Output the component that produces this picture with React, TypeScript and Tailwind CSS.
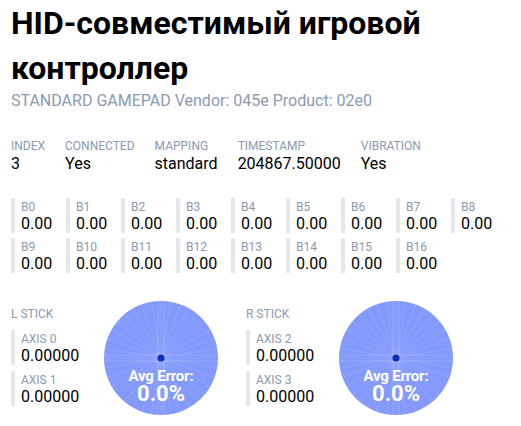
import React from "react";

const LABEL = "text-[12px] leading-4 text-[#8a9ab1] uppercase";

function Cell({ label, value, w }: { label: string; value: string; w: string }) {
  return (
    <div className={`flex flex-col border-l-4 border-[#e5e7eb] pl-[6px] pt-[1px] h-[35px] ${w}`}>
      <div className="text-[12px] leading-4 text-[#8a9ab1]">{label}</div>
      <div className="text-[16px] leading-[18px] text-black">{value}</div>
    </div>
  );
}

function Stick({ name, axes }: { name: string; axes: string[] }) {
  const spokes = Array.from({ length: 36 }, (_, i) => (i * Math.PI) / 18);
  return (
    <div className="flex">
      <div className="flex flex-col w-[93px] pt-[4px]">
        <div className={LABEL}>{name}</div>
        <div className="mt-[8px] flex flex-col gap-[6px]">
          {axes.map((a) => (
            <Cell key={a} label={a} value="0.00000" w="w-[69px]" />
          ))}
        </div>
      </div>
      <div className="relative w-[114px] h-[114px] -mt-[1px]">
        <svg width="114" height="114" viewBox="0 0 114 114">
          <circle cx="57" cy="57" r="57" fill="#8399fb" />
          {spokes.map((t, i) => (
            <line
              key={i}
              x1="57"
              y1="57"
              x2={57 + 57 * Math.cos(t)}
              y2={57 + 57 * Math.sin(t)}
              stroke="#ffffff"
              strokeOpacity="0.22"
              strokeWidth="0.6"
            />
          ))}
          <line x1="54" y1="0" x2="54" y2="114" stroke="#ffffff" strokeOpacity="0.18" strokeWidth="1" />
          <line x1="60" y1="0" x2="60" y2="114" stroke="#ffffff" strokeOpacity="0.18" strokeWidth="1" />
          <line x1="0" y1="54" x2="114" y2="54" stroke="#ffffff" strokeOpacity="0.18" strokeWidth="1" />
          <line x1="0" y1="60" x2="114" y2="60" stroke="#ffffff" strokeOpacity="0.18" strokeWidth="1" />
          <circle cx="57" cy="57" r="3.6" fill="#0a31b8" />
        </svg>
        <div className="absolute left-0 right-0 top-[68px] flex flex-col items-center text-white font-bold">
          <div className="text-[15px] leading-[14px] tracking-[-0.2px]">Avg Error:</div>
          <div className="text-[22px] leading-[21px]">0.0%</div>
        </div>
      </div>
    </div>
  );
}

export default function App() {
  const info = [
    ["INDEX", "3"],
    ["CONNECTED", "Yes"],
    ["MAPPING", "standard"],
    ["TIMESTAMP", "204867.50000"],
    ["VIBRATION", "Yes"],
  ];
  const buttons = Array.from({ length: 17 }, (_, i) => `B${i}`);
  return (
    <div className="px-[11px] font-['Roboto',sans-serif] text-black bg-white min-h-[426px]">
      <h1 className="text-[32px] font-bold leading-[45px] pt-[1px]">
        HID-совместимый игровой контроллер
      </h1>
      <div className="text-[16px] leading-5 text-[#8a9ab1]">
        STANDARD GAMEPAD Vendor: 045e Product: 02e0
      </div>
      <div className="mt-[27px] flex gap-5">
        {info.map(([l, v]) => (
          <div key={l} className="flex flex-col">
            <div className={LABEL}>{l}</div>
            <div className="text-[16px] leading-5">{v}</div>
          </div>
        ))}
      </div>
      <div className="mt-[24px] flex flex-wrap gap-[5px] w-[495px]">
        {buttons.map((b) => (
          <Cell key={b} label={b} value="0.00" w="w-[50px]" />
        ))}
      </div>
      <div className="mt-[29px] flex gap-[28px]">
        <Stick name="L STICK" axes={["AXIS 0", "AXIS 1"]} />
        <Stick name="R STICK" axes={["AXIS 2", "AXIS 3"]} />
      </div>
    </div>
  );
}
